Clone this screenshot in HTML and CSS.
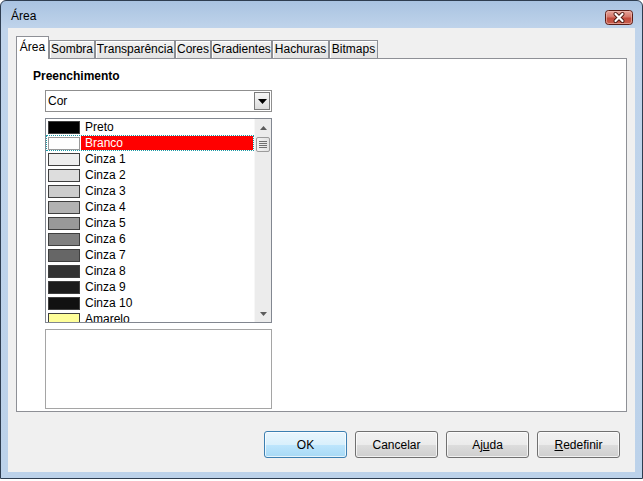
FILE: index.html
```html
<!DOCTYPE html>
<html>
<head>
  <meta charset="UTF-8">
  <title>Área</title>
  <link rel="stylesheet" href="styles.css">
</head>
<body>
  <div class="window">
    <div class="titlebar">
      <span class="title">Área</span>
      <div class="close">
        <svg width="28" height="15" viewBox="0 0 28 15">
          <defs>
            <linearGradient id="cg" x1="0" y1="0" x2="0" y2="1">
              <stop offset="0" stop-color="#e9a99f"/>
              <stop offset="0.45" stop-color="#d5786c"/>
              <stop offset="0.55" stop-color="#c24a3c"/>
              <stop offset="1" stop-color="#c8604f"/>
            </linearGradient>
          </defs>
          <rect x="0.5" y="0.5" width="27" height="14" rx="3" fill="url(#cg)" stroke="#5a1d17"/>
          <rect x="1.5" y="1.5" width="25" height="12" rx="2" fill="none" stroke="#f0c2b9" stroke-opacity="0.6"/>
          <path d="M10.5 4 L17.5 11 M17.5 4 L10.5 11" stroke="#4a1a14" stroke-width="4" stroke-linecap="round"/>
          <path d="M10.5 4 L17.5 11 M17.5 4 L10.5 11" stroke="#ffffff" stroke-width="2.2" stroke-linecap="round"/>
        </svg>
      </div>
    </div>

    <div class="client">
      <div class="tabs">
        <div class="tab active tab-area">Área</div>
        <div class="tab tab-sombra">Sombra</div>
        <div class="tab tab-transp">Transparência</div>
        <div class="tab tab-cores">Cores</div>
        <div class="tab tab-grad">Gradientes</div>
        <div class="tab tab-hach">Hachuras</div>
        <div class="tab tab-bitmaps">Bitmaps</div>
      </div>

      <div class="panel">
        <div class="heading">Preenchimento</div>
        <div class="fill">
          <div class="select">
            <span class="select-value">Cor</span>
            <span class="drop">
              <svg width="9" height="5" viewBox="0 0 9 5"><polygon points="0,0 9,0 4.5,5" fill="#000"/></svg>
            </span>
          </div>

          <div class="listbox">
            <ul class="items">
              <li class="item"><span class="swatch sw-preto"></span><span class="label">Preto</span></li>
              <li class="item selected"><span class="swatch sw-branco"></span><span class="label">Branco</span></li>
              <li class="item"><span class="swatch sw-c1"></span><span class="label">Cinza 1</span></li>
              <li class="item"><span class="swatch sw-c2"></span><span class="label">Cinza 2</span></li>
              <li class="item"><span class="swatch sw-c3"></span><span class="label">Cinza 3</span></li>
              <li class="item"><span class="swatch sw-c4"></span><span class="label">Cinza 4</span></li>
              <li class="item"><span class="swatch sw-c5"></span><span class="label">Cinza 5</span></li>
              <li class="item"><span class="swatch sw-c6"></span><span class="label">Cinza 6</span></li>
              <li class="item"><span class="swatch sw-c7"></span><span class="label">Cinza 7</span></li>
              <li class="item"><span class="swatch sw-c8"></span><span class="label">Cinza 8</span></li>
              <li class="item"><span class="swatch sw-c9"></span><span class="label">Cinza 9</span></li>
              <li class="item"><span class="swatch sw-c10"></span><span class="label">Cinza 10</span></li>
              <li class="item"><span class="swatch sw-amarelo"></span><span class="label">Amarelo</span></li>
            </ul>
            <div class="scrollbar">
              <div class="arrow">
                <svg width="7" height="4" viewBox="0 0 7 4"><polygon points="3.5,0 7,4 0,4" fill="#5c5c5c"/></svg>
              </div>
              <div class="thumb"><span></span><span></span><span></span><span></span></div>
              <div class="track"></div>
              <div class="arrow">
                <svg width="7" height="4" viewBox="0 0 7 4"><polygon points="0,0 7,0 3.5,4" fill="#5c5c5c"/></svg>
              </div>
            </div>
          </div>

          <div class="preview"></div>
        </div>
      </div>

      <div class="buttons">
        <button class="btn default">OK</button>
        <button class="btn">Cancelar</button>
        <button class="btn">Aj<u>u</u>da</button>
        <button class="btn"><u>R</u>edefinir</button>
      </div>
    </div>
  </div>
</body>
</html>
```

FILE: styles.css
```css
body {
  margin: 0;
  background-color: #ffffff;
  font-family: "Liberation Sans", Arial, sans-serif;
  font-size: 12px;
  color: #000000;
}
.window {
  width: 643px;
  height: 479px;
  box-sizing: border-box;
  border: 1px solid #2e3d50;
  border-radius: 6px 6px 0 0;
  padding: 0 7px 6px 7px;
  background: linear-gradient(#a9c3e1 0, #c0d4eb 28px, #bcd2ea 100%);
  display: flex;
  flex-direction: column;
}
.titlebar {
  height: 27px;
  display: flex;
  justify-content: space-between;
  align-items: flex-start;
}
.title {
  padding: 7px 0 0 3px;
  line-height: 16px;
}
.close {
  margin: 9px 2px 0 0;
  height: 15px;
}
.close svg {
  display: block;
}
.client {
  flex: 1;
  background-color: #f0f0f0;
  padding: 8px 8px 0 8px;
  display: flex;
  flex-direction: column;
}
.tabs {
  display: flex;
  align-items: flex-end;
  margin-bottom: -1px;
  position: relative;
  z-index: 1;
}
.tab {
  box-sizing: border-box;
  height: 18px;
  margin-bottom: 1px;
  border: 1px solid #8e9096;
  border-bottom: none;
  background: linear-gradient(#f2f2f2, #e3e3e3);
  box-shadow: inset 1px 1px 0 #ffffff;
  line-height: 17px;
  text-align: center;
  white-space: nowrap;
}
.tab.active {
  height: 23px;
  margin-bottom: 0;
  background: #ffffff;
  box-shadow: none;
  line-height: 21px;
  padding-bottom: 1px;
}
.tab-area { width: 33px; }
.tab-sombra { width: 46px; }
.tab-transp { width: 80px; }
.tab-cores { width: 36px; }
.tab-grad { width: 61px; }
.tab-hach { width: 57px; }
.tab-bitmaps { width: 49px; }
.panel {
  box-sizing: border-box;
  height: 354px;
  border: 1px solid #8e9096;
  background-color: #ffffff;
  padding: 9px 0 0 16px;
}
.heading {
  font-weight: bold;
  line-height: 16px;
}
.fill {
  margin-left: 12px;
  width: 227px;
}
.select {
  box-sizing: border-box;
  height: 22px;
  margin-top: 6px;
  border: 1px solid #8f8f8f;
  background-color: #ffffff;
  display: flex;
  align-items: center;
  justify-content: space-between;
}
.select-value {
  padding-left: 2px;
}
.drop {
  box-sizing: border-box;
  width: 16px;
  height: 18px;
  margin-right: 1px;
  border: 1px solid #7b7b7b;
  background: linear-gradient(#f7f7f7, #dcdcdc);
  display: flex;
  align-items: center;
  justify-content: center;
}
.drop svg {
  display: block;
}
.listbox {
  box-sizing: border-box;
  height: 205px;
  margin-top: 6px;
  border: 1px solid #828790;
  background-color: #ffffff;
  display: flex;
  overflow: hidden;
}
.items {
  list-style: none;
  margin: 0;
  padding: 0;
  flex: 1;
  overflow: hidden;
}
.item {
  height: 16px;
  display: flex;
  align-items: center;
  box-sizing: border-box;
}
.swatch {
  box-sizing: border-box;
  width: 32px;
  height: 13px;
  margin-left: 2px;
  border: 1px solid #3f3f3f;
  flex-shrink: 0;
}
.label {
  margin-left: 1px;
  padding-left: 4px;
  line-height: 14px;
  flex: 1;
}
.item.selected {
  outline: 1px dotted #1c9aa6;
  outline-offset: -1px;
}
.item.selected .label {
  background-color: #ff0000;
  color: #ffffff;
  margin-right: 1px;
}
.item.selected .swatch {
  border-color: #9a9a9a;
}
.sw-preto { background-color: #000000; }
.sw-branco { background-color: #ffffff; }
.sw-c1 { background-color: #eeeeee; }
.sw-c2 { background-color: #dddddd; }
.sw-c3 { background-color: #cccccc; }
.sw-c4 { background-color: #b2b2b2; }
.sw-c5 { background-color: #999999; }
.sw-c6 { background-color: #808080; }
.sw-c7 { background-color: #666666; }
.sw-c8 { background-color: #333333; }
.sw-c9 { background-color: #1c1c1c; }
.sw-c10 { background-color: #111111; }
.sw-amarelo { background-color: #ffff99; }
.scrollbar {
  width: 17px;
  background-color: #ececec;
  border-left: 1px solid #f7f7f7;
  box-sizing: border-box;
  display: flex;
  flex-direction: column;
  align-items: center;
}
.arrow {
  height: 17px;
  display: flex;
  align-items: center;
  justify-content: center;
}
.arrow svg {
  display: block;
}
.thumb {
  box-sizing: border-box;
  width: 14px;
  height: 15px;
  margin-top: 1px;
  border: 1px solid #9b9b9b;
  border-radius: 2px;
  background: linear-gradient(90deg, #f3f3f3, #e2e2e2);
  display: flex;
  flex-direction: column;
  align-items: center;
  justify-content: center;
  gap: 1px;
}
.thumb span {
  width: 8px;
  height: 1px;
  background-color: #6f6f6f;
}
.track {
  flex: 1;
}
.preview {
  box-sizing: border-box;
  height: 80px;
  margin-top: 6px;
  border: 1px solid #a5a5a5;
  background-color: #ffffff;
}
.buttons {
  display: flex;
  justify-content: flex-end;
  gap: 8px;
  margin-top: 19px;
  padding-right: 7px;
}
.btn {
  box-sizing: border-box;
  width: 83px;
  height: 27px;
  border: 1px solid #707070;
  border-radius: 3px;
  background: linear-gradient(#f2f2f2 0%, #ebebeb 50%, #dddddd 50%, #cfcfcf 100%);
  box-shadow: inset 0 0 0 1px rgba(255, 255, 255, 0.7);
  font-family: "Liberation Sans", Arial, sans-serif;
  font-size: 12px;
  color: #000000;
  padding: 0;
}
.btn.default {
  border-color: #3c7fb1;
  background: linear-gradient(#eaf6fd 0%, #d9f0fc 50%, #bee6fd 50%, #a7d9f5 100%);
}
```
